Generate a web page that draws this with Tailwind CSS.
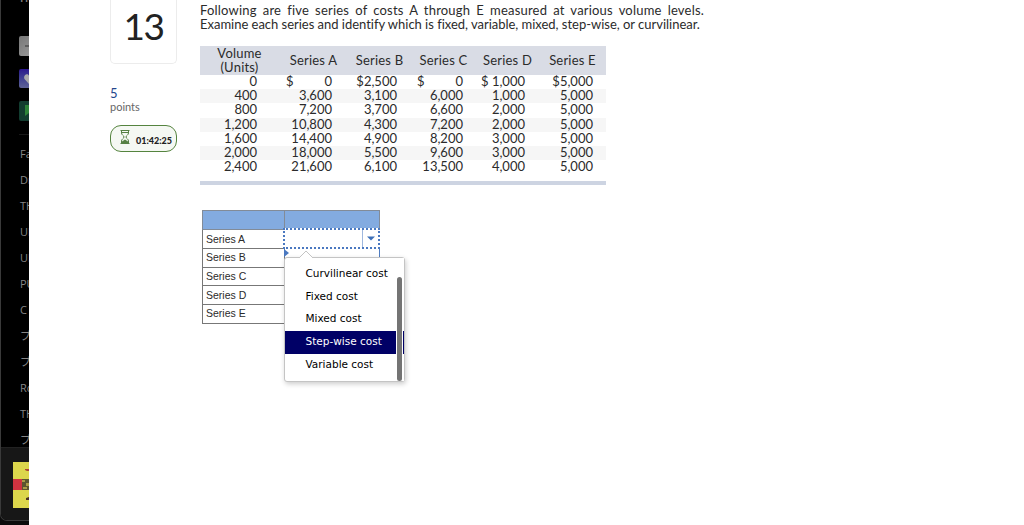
<!DOCTYPE html>
<html lang="en">
<head>
  <meta charset="UTF-8" />
  <meta name="viewport" content="width=device-width, initial-scale=1.0"/>
  <title>Question 13</title>
  <script src="https://cdn.jsdelivr.net/npm/@tailwindcss/browser@4"></script>
</head>
<body class="bg-white flex h-[525px] overflow-hidden text-[#2b2b2b] font-[Lato,'Open_Sans',sans-serif]">

  <!-- edge of the music player window -->
  <aside class="w-[29px] h-[525px] shrink-0 overflow-hidden bg-[#0c0c0c]">
    <div class="w-[60px] h-[521px] flex flex-col bg-black border-l border-b border-[#3a3a3a] rounded-bl-[7px] overflow-hidden font-['Open_Sans','Noto_Sans_CJK_JP',sans-serif] text-[#858585] text-[11px] whitespace-nowrap">
      <div class="h-[447px] shrink-0 pl-[18px] overflow-hidden">
        <div class="h-[36px] overflow-hidden"><div class="-mt-[10px] pl-px h-4 leading-4 font-semibold">Home</div></div>
        <div class="size-5 rounded-[2px] bg-gradient-to-br from-[#777] to-[#a0a0a0]">
          <svg viewBox="0 0 20 20" class="size-5"><path d="M6 10h8" stroke="#444" stroke-width="1.3"/></svg>
        </div>
        <div class="size-5 h-[19px] mt-[13px] rounded-[2px] bg-gradient-to-b from-[#2c158c] to-[#5f6296]">
          <svg viewBox="0 0 20 20" class="size-5"><path d="M10 15 5.700 10.300C3.500 7 8 3 10 6.800 12 3 16.500 7 14.300 10.300Z" fill="#aaa"/></svg>
        </div>
        <div class="size-5 mt-[13px] rounded-[2px] bg-[#123d30]">
          <svg viewBox="0 0 20 20" class="size-5"><path d="M6 4h8v11l-4-3-4 3Z" fill="#2c8339"/></svg>
        </div>
        <div class="h-px bg-[#191919] mt-[13px] mb-[6px]"></div>
        <ul class="leading-[25px] pl-px">
          <li class="h-[26px]">Favorites</li>
          <li class="h-[26px]">Drive</li>
          <li class="h-[26px]">THE BEST</li>
          <li class="h-[26px]">UK Mix</li>
          <li class="h-[26px]">UK Hits</li>
          <li class="h-[26px]">PUNK</li>
          <li class="h-[26px]">C</li>
          <li class="h-[26px]">プレイリスト</li>
          <li class="h-[26px]">プレイリスト</li>
          <li class="h-[26px]">Rock</li>
          <li class="h-[26px]">THE</li>
          <li class="h-[26px]">プレイリスト</li>
        </ul>
      </div>
      <div class="flex-1 bg-[#171717] border-t border-[#222] pl-[12px] pt-[14px]">
        <svg viewBox="0 0 46 46" class="size-[46px]">
          <rect width="46" height="46" fill="#dcd64c"/>
          <rect y="17" width="9" height="11" fill="#cf3340"/>
          <rect x="9" y="17" width="37" height="11" fill="#5c5630"/>
          <path d="M9 18h3v2H9zM13 21h3v3h-3zM10 25h4v2h-4z" fill="#a99c47"/>
          <path d="M12 7h4v2h-2l-2-1z" fill="#a94435"/>
          <path d="M13 36l3-1v3h-3z" fill="#4c3326"/>
        </svg>
      </div>
    </div>
  </aside>

  <main class="flex pl-[81px]">
    <section class="w-[67px] mr-[23px] shrink-0">
      <div class="h-[64px] border border-t-0 border-[#ececec] rounded-b-[5px] text-center text-[37px] leading-[51px] tracking-[-1.5px] text-[#222]">13</div>
      <div class="mt-[22px] text-[13px] leading-[14px] text-[#23468c]">5</div>
      <div class="text-[11px] leading-[14px] text-[#666]">points</div>
      <div class="mt-[11px] h-[27px] flex items-center rounded-[11px] border border-[#55843f] bg-[#f5f8f3] pl-[9px]">
        <svg viewBox="0 0 10 16" class="w-[10px] h-[16px] -mt-1 shrink-0" fill="none" stroke="#568044">
          <path d="M.5 1.500h9M.5 14.500h9M1.500 1.500v2.500c0 2 2.500 2.500 2.500 4s-2.500 2-2.500 4v2.500M8.500 1.500v2.500c0 2-2.500 2.500-2.500 4s2.500 2 2.500 4v2.500M2 3.500h6"/>
          <path d="M2 14v-1.500l3-2 3 2V14Z" fill="#568044" stroke="none"/>
        </svg>
        <span class="ml-[6px] mt-[4px] text-[9px] font-black text-[#222] leading-none">01:42:25</span>
      </div>
    </section>

    <section class="w-[504px] pt-[3px]">
      <div class="text-[13px] leading-[14px] whitespace-nowrap">
        <p class="tracking-[0.2px] [text-align-last:justify]">Following are five series of costs A through E measured at various volume levels.</p>
        <p class="w-[500px] tracking-[-0.02px]">Examine each series and identify which is fixed, variable, mixed, step-wise, or curvilinear.</p>
      </div>

      <div class="mt-[15px] w-[406px] h-[139px] border-b-4 border-[#cdd4e2]">
        <table class="w-[406px] table-fixed border-collapse text-[13px] leading-[14px] text-right">
          <colgroup>
            <col class="w-[78px]"><col class="w-[70px]"><col class="w-[62px]"><col class="w-[66px]"><col class="w-[62px]"><col class="w-[68px]">
          </colgroup>
          <thead>
            <tr class="h-[29px] bg-[#d9dce5] text-center tracking-[0.2px]">
              <th class="p-0 pb-px pl-px font-normal">Volume<br>(Units)</th>
              <th class="p-0 pb-[2px] pl-px font-normal">Series A</th>
              <th class="p-0 pb-[2px] pl-px font-normal">Series B</th>
              <th class="p-0 pb-[2px] pl-px font-normal">Series C</th>
              <th class="p-0 pb-[2px] pl-px font-normal">Series D</th>
              <th class="p-0 pb-[2px] pl-px font-normal">Series E</th>
            </tr>
          </thead>
          <tbody id="costs"></tbody>
        </table>
      </div>

      <div class="relative mt-[25px] ml-[2px] w-[178px]">
        <table class="w-[177px] table-fixed border-collapse font-['Liberation_Sans',Arial,sans-serif] text-[10.500px] leading-[17px]">
          <colgroup><col class="w-[82px]"><col class="w-[95px]"></colgroup>
          <tr class="h-[19px] bg-[#83abe0]"><td class="border border-[#828b98]"></td><td class="border border-[#828b98]"></td></tr>
          <tr class="h-[19px]"><td class="border border-[#777] p-0 pl-[3px]">Series A</td><td></td></tr>
          <tr class="h-[18.700px]"><td class="border border-[#777] p-0 pl-[3px]">Series B</td><td class="border-r border-[#4f7cc0]"></td></tr>
          <tr class="h-[18.700px]"><td class="border border-[#777] p-0 pl-[3px]">Series C</td><td></td></tr>
          <tr class="h-[18.700px]"><td class="border border-[#777] p-0 pl-[3px]">Series D</td><td></td></tr>
          <tr class="h-[18.700px]"><td class="border border-[#777] p-0 pl-[3px]">Series E</td><td></td></tr>
        </table>

        <!-- focused select -->
        <div class="absolute left-[81px] top-[18px] w-[97px] h-[21px] border-2 border-dotted border-[#4a78c0] bg-white flex justify-end">
          <div class="w-[16px] border-l border-[#9fb8de] flex items-center justify-center">
            <svg viewBox="0 0 8 5" class="w-[8px] h-[5px]"><path d="M0 .5h8L4 4.500Z" fill="#3c6fb8"/></svg>
          </div>
        </div>
        <svg viewBox="0 0 5 8" class="absolute left-[82px] top-[39px] w-[5px] h-[8px]"><path d="M0 0l5 4-5 4Z" fill="#4a78c0"/></svg>

        <!-- open option list -->
        <div class="absolute left-[82px] top-[47px] w-[121px] h-[125px] bg-white border border-[#c4c4c4] rounded-[3px] shadow-[1px_2px_5px_rgba(0,0,0,0.2)] pt-[5px] font-['DejaVu_Sans',Verdana,sans-serif] text-[10.500px] text-black">
          <svg viewBox="0 0 16 8" class="absolute left-[13px] -top-[8px] w-[16px] h-[8px]"><path d="M1 8l7-7 7 7" fill="#fff" stroke="#c4c4c4"/></svg>
          <ul class="leading-[21px]">
            <li class="pl-[20.500px] h-[22.700px]">Curvilinear cost</li>
            <li class="pl-[20.500px] h-[22.700px]">Fixed cost</li>
            <li class="pl-[20.500px] h-[22.700px]">Mixed cost</li>
            <li class="pl-[20.500px] h-[22.700px] bg-[#000066] text-white">Step-wise cost</li>
            <li class="pl-[20.500px] h-[22.700px]">Variable cost</li>
          </ul>
          <div class="absolute right-0 top-0 h-full w-[8px] bg-white"></div>
          <div class="absolute right-0 top-[73px] h-[23px] w-px bg-[#000066]"></div>
          <div class="absolute right-[2px] top-[19px] h-[104px] w-[5px] rounded-[3px] bg-[#747474]"></div>
        </div>
      </div>
    </section>
  </main>

  <script>
    const rows = [
      ['0', '0', '$2,500', '0', '$ 1,000', '$5,000'],
      ['400', '3,600', '3,100', '6,000', '1,000', '5,000'],
      ['800', '7,200', '3,700', '6,600', '2,000', '5,000'],
      ['1,200', '10,800', '4,300', '7,200', '2,000', '5,000'],
      ['1,600', '14,400', '4,900', '8,200', '3,000', '5,000'],
      ['2,000', '18,000', '5,500', '9,600', '3,000', '5,000'],
      ['2,400', '21,600', '6,100', '13,500', '4,000', '5,000']
    ];
    const pads = ['pr-[21px]', 'pr-[16px]', 'pr-[13px]', 'pr-[13px]', 'pr-[13px]', 'pr-[13px]'];

    document.getElementById('costs').innerHTML = rows.map((row, r) => {
      const cells = row.map((value, c) => {
        // dollar sign sits at the left of the column when the value is zero
        const dollar = r === 0 && (c === 1 || c === 3)
          ? `<span class="float-left ${c === 1 ? 'ml-[8px]' : 'ml-[7px]'}">$</span>` : '';
        return `<td class="p-0 ${pads[c]}"><div class="relative -top-px">${dollar}${value}</div></td>`;
      }).join('');
      return `<tr class="h-[14.2px] ${r % 2 ? 'bg-[#f6f6f6]' : ''}">${cells}</tr>`;
    }).join('');
  </script>
</body>
</html>
